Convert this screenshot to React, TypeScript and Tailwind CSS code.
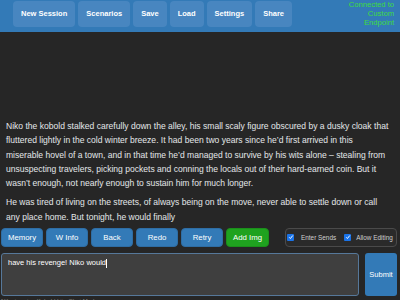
const topButtons = ["New Session", "Scenarios", "Save", "Load", "Settings", "Share"];
const actionButtons = ["Memory", "W Info", "Back", "Redo", "Retry"];

const CheckBox = () => (
  <span className="shrink-0 w-[7px] h-[7px] rounded-[1px] bg-[#1a73e8] flex items-center justify-center">
    <svg viewBox="0 0 10 10" className="w-[6px] h-[6px]">
      <path d="M2 5.5 L4 7.5 L8 2.5" fill="none" stroke="#fff" strokeWidth="1.6" />
    </svg>
  </span>
);

const App = () => {
  return (
    <div
      className="w-[400px] h-[300px] overflow-hidden flex flex-col bg-[#262626]"
      style={{ fontFamily: '"Liberation Sans", Arial, sans-serif' }}
    >
      {/* Top Nav */}
      <div className="h-[32px] shrink-0 bg-[#337ab7] flex items-start pl-[13px]">
        <div className="flex gap-[3px] mt-[1px]">
          {topButtons.map((label) => (
            <button
              key={label}
              className="h-[26px] px-[8px] rounded-[4px] bg-[#4886c0] text-white font-bold text-[7.5px]"
            >
              {label}
            </button>
          ))}
        </div>
        <div className="ml-auto pr-[6px] text-right text-[7.6px] leading-[9px] text-[#3fdc3f]">
          Connected to
          <br />
          Custom
          <br />
          Endpoint
        </div>
      </div>

      {/* Story */}
      <div className="h-[196px] shrink-0 flex flex-col justify-end px-[6px] pb-[4px] text-[8.55px] leading-[14.3px] text-[#e4e6ea]">
        <p className="mb-[5px]">
          Niko the kobold stalked carefully down the alley, his small scaly figure obscured by a dusky cloak that
          <br />
          fluttered lightly in the cold winter breeze. It had been two years since he’d first arrived in this
          <br />
          miserable hovel of a town, and in that time he’d managed to survive by his wits alone – stealing from
          <br />
          unsuspecting travelers, picking pockets and conning the locals out of their hard-earned coin. But it
          <br />
          wasn’t enough, not nearly enough to sustain him for much longer.
        </p>
        <p>
          He was tired of living on the streets, of always being on the move, never able to settle down or call
          <br />
          any place home. But tonight, he would finally
        </p>
      </div>

      {/* Action Row */}
      <div className="h-[19px] shrink-0 flex items-stretch pl-[1px] pr-[3px]">
        <div className="flex gap-[3px]">
          {actionButtons.map((label) => (
            <button
              key={label}
              className="w-[42px] rounded-[4px] bg-[#337ab7] border border-[#2e6da4] text-white text-[7.8px]"
            >
              {label}
            </button>
          ))}
          <button className="w-[43px] rounded-[4px] bg-[#1fa21f] border border-[#1b8f1b] text-white text-[7.8px]">
            Add Img
          </button>
        </div>
        <div className="ml-auto w-[112px] flex items-center gap-[8px] pl-[1px] rounded-[4px] border border-[#4a4a4a] bg-[#2a2a2a] text-[#cfcfcf] text-[6.4px] whitespace-nowrap">
          <div className="flex items-center gap-[7px]">
            <CheckBox />
            <span>Enter Sends</span>
          </div>
          <div className="flex items-center gap-[5px]">
            <CheckBox />
            <span>Allow Editing</span>
          </div>
        </div>
      </div>

      {/* Input Row */}
      <div className="mt-[6px] h-[43px] shrink-0 flex pl-[1px] pr-[3px]">
        <div className="w-[358px] rounded-[3px] border border-[#56789a] bg-[#3f3f3f] px-[6px] py-[4px] text-white text-[7.5px] leading-[9px]">
          have his revenge! Niko would
          <span className="inline-block w-[1px] h-[9px] bg-white align-middle" />
        </div>
        <button className="ml-auto w-[32px] rounded-[3px] bg-[#337ab7] text-white text-[7.5px]">
          Submit
        </button>
      </div>

      <div className="shrink-0 pl-[1px] pt-[2px] text-[6px] leading-[7px] text-[#8a8a8a]">
        Niko is using Kobold Lite Chat Mode
      </div>
    </div>
  );
};

export default App;
